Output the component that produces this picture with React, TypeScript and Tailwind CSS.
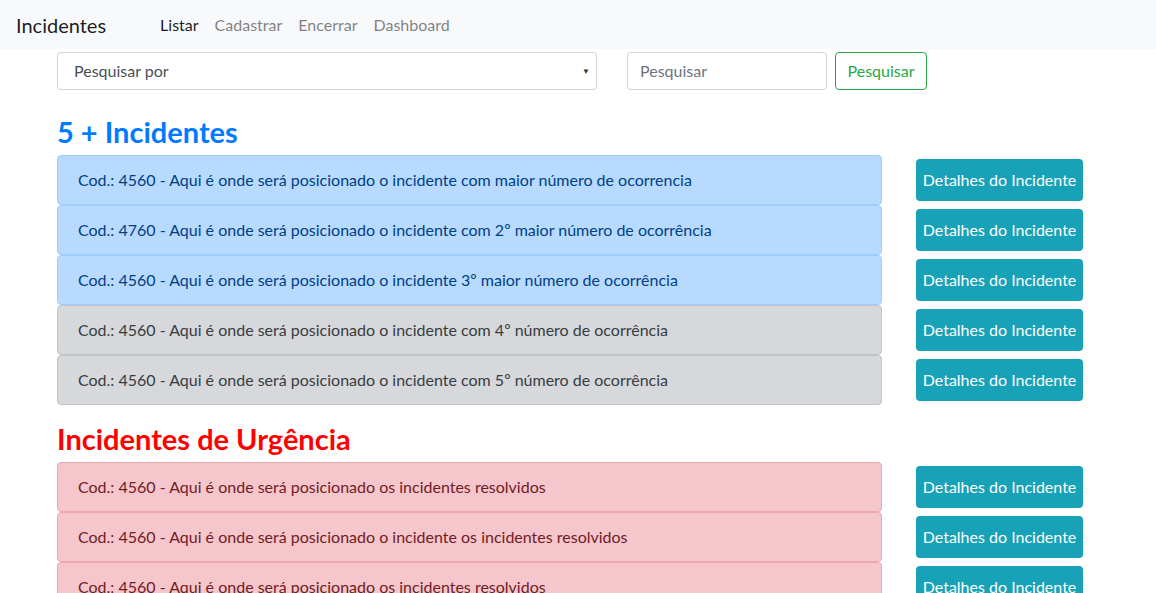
import React from "react";

type Item = { text: string; tone: "primary" | "secondary" | "danger" };

const topFive: Item[] = [
  { text: "Cod.: 4560 - Aqui é onde será posicionado o incidente com maior número de ocorrencia", tone: "primary" },
  { text: "Cod.: 4760 - Aqui é onde será posicionado o incidente com 2º maior número de ocorrência", tone: "primary" },
  { text: "Cod.: 4560 - Aqui é onde será posicionado o incidente 3º maior número de ocorrência", tone: "primary" },
  { text: "Cod.: 4560 - Aqui é onde será posicionado o incidente com 4º número de ocorrência", tone: "secondary" },
  { text: "Cod.: 4560 - Aqui é onde será posicionado o incidente com 5º número de ocorrência", tone: "secondary" },
];

const urgent: Item[] = [
  { text: "Cod.: 4560 - Aqui é onde será posicionado os incidentes resolvidos", tone: "danger" },
  { text: "Cod.: 4560 - Aqui é onde será posicionado o incidente os incidentes resolvidos", tone: "danger" },
  { text: "Cod.: 4560 - Aqui é onde será posicionado os incidentes resolvidos", tone: "danger" },
];

const toneClass = {
  primary: "bg-[#b8daff] border-[#9fcdff] text-[#004085]",
  secondary: "bg-[#d6d8db] border-[#c1c4c8] text-[#383d41]",
  danger: "bg-[#f5c6cb] border-[#eda9b0] text-[#721c24]",
};

const Row = ({ item }: { item: Item }) => (
  <div className="flex items-center">
    <div
      className={`w-[825px] h-[50px] flex items-center px-5 border rounded text-[16px] ${toneClass[item.tone]}`}
    >
      {item.text}
    </div>
    <button className="ml-[34px] w-[167px] h-[42px] rounded bg-[#17a2b8] text-white text-[16px]">
      Detalhes do Incidente
    </button>
  </div>
);

export default function App() {
  return (
    <div className="min-h-screen bg-white text-[#212529] font-['Lato',sans-serif]">
      <nav className="h-[49px] bg-[#f8f9fa] flex items-center px-4">
        <span className="text-[20px] text-black/90 mr-[54px]">Incidentes</span>
        <ul className="flex gap-4 text-[16px]">
          <li className="text-black/90">Listar</li>
          <li className="text-black/50">Cadastrar</li>
          <li className="text-black/50">Encerrar</li>
          <li className="text-black/50">Dashboard</li>
        </ul>
      </nav>

      <main className="pl-[57px]">
        <div className="flex items-center mt-[3px]">
          <div className="relative w-[540px] h-[38px] border border-[#ced4da] rounded flex items-center px-4 text-[16px] text-[#495057]">
            Pesquisar por
            <span className="absolute right-[6px] text-[8px] text-[#333]">▼</span>
          </div>
          <div className="ml-[30px] w-[200px] h-[38px] border border-[#ced4da] rounded flex items-center px-3 text-[16px] text-[#6c757d]">
            Pesquisar
          </div>
          <button className="ml-2 w-[92px] h-[38px] border border-[#28a745] rounded text-[16px] text-[#28a745]">
            Pesquisar
          </button>
        </div>

        <h2 className="mt-[24px] mb-[6px] text-[29px] leading-[35px] font-bold text-[#007bff]">5 + Incidentes</h2>
        <div className="flex flex-col">
          {topFive.map((it, i) => (
            <Row key={i} item={it} />
          ))}
        </div>

        <h2 className="mt-[16px] mb-[6px] text-[29px] leading-[35px] font-bold text-[#ff0000]">
          Incidentes de Urgência
        </h2>
        <div className="flex flex-col">
          {urgent.map((it, i) => (
            <Row key={i} item={it} />
          ))}
        </div>
      </main>
    </div>
  );
}
